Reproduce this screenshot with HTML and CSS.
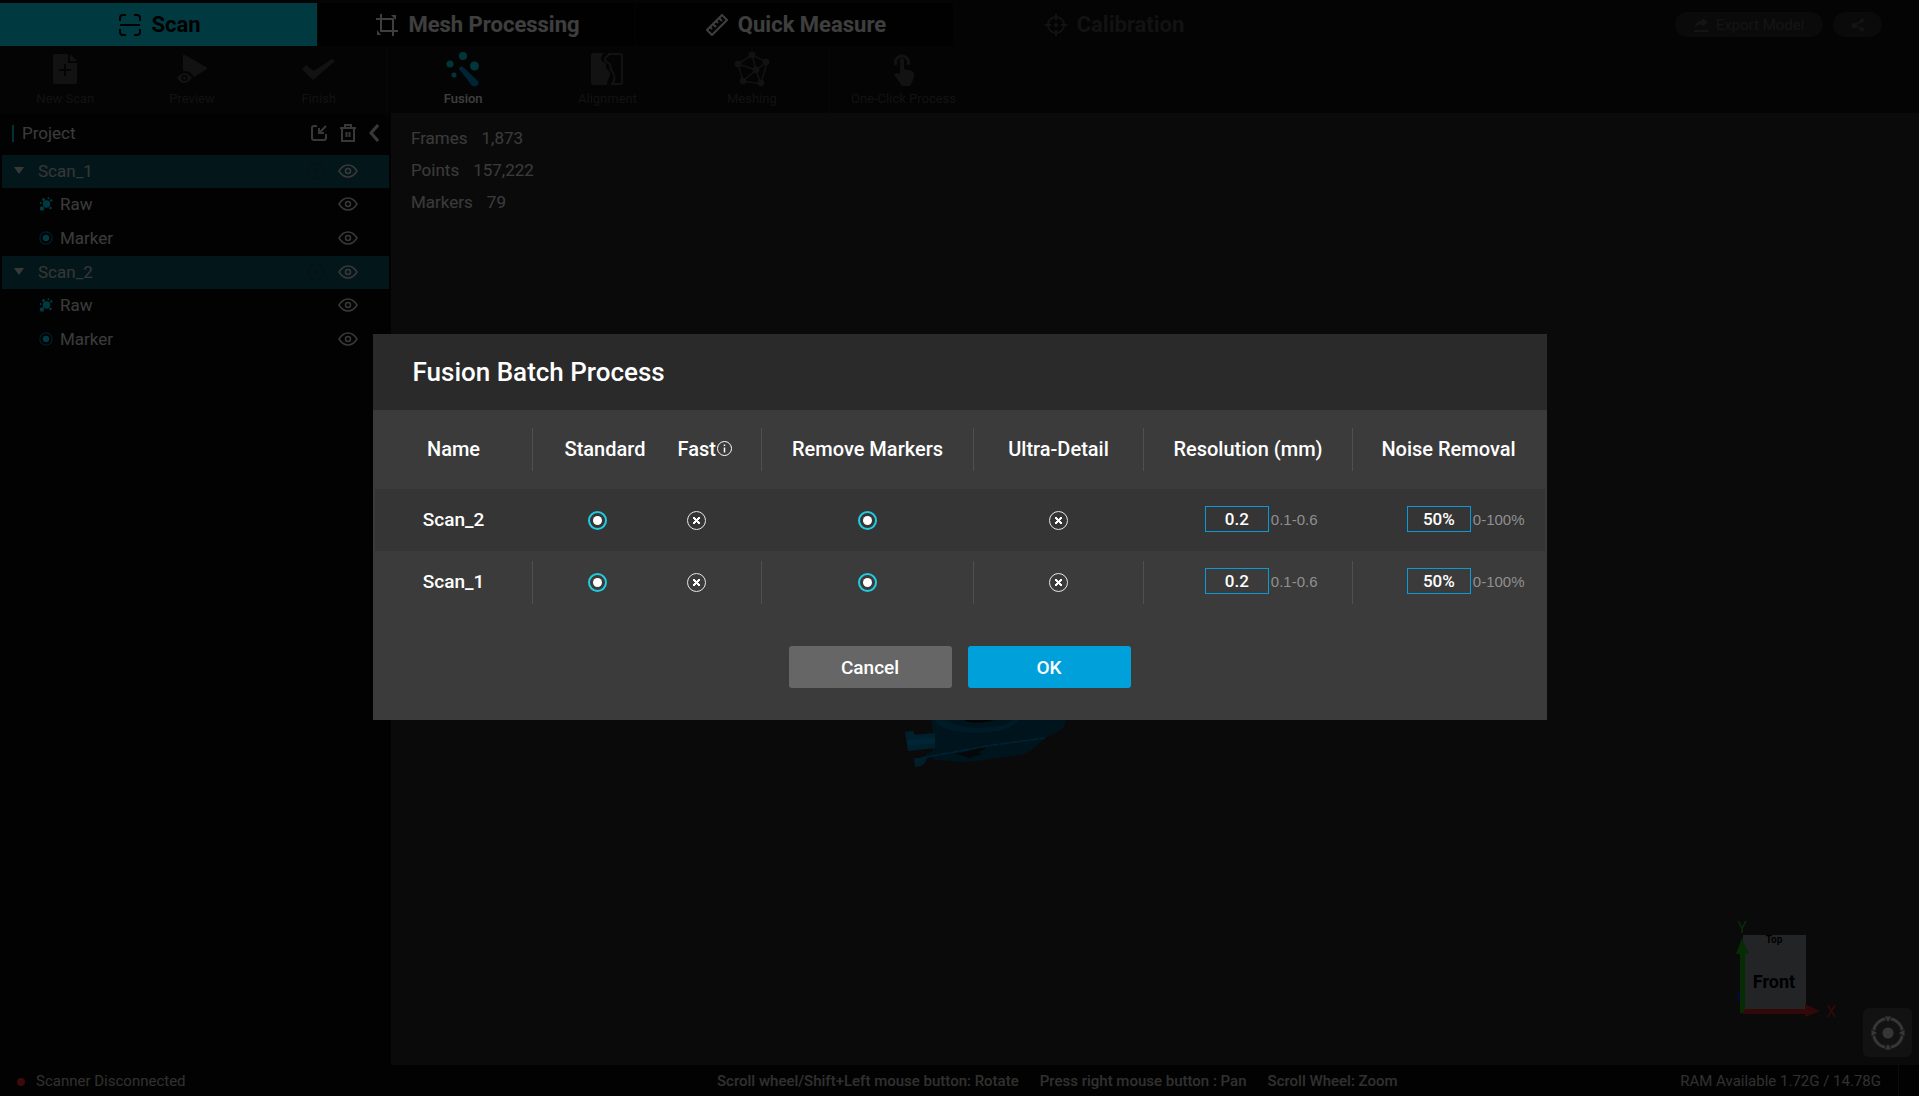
FILE: index.html
```html
<!DOCTYPE html>
<html lang="en">
<head>
    <meta charset="UTF-8">
    <meta name="viewport" content="width=device-width, initial-scale=1.0">
    <title>Fusion Batch Process</title>
    <link rel="stylesheet" href="styles.css">
</head>
<body>
    <!-- Shared icons -->
    <svg class="icon-defs" width="0" height="0" aria-hidden="true">
        <symbol id="icon-eye" viewBox="0 0 20 14">
            <path d="M1 7C3.500 3 6.500 1 10 1s6.500 2 9 6c-2.500 4-5.500 6-9 6S3.500 11 1 7z" fill="none" stroke="currentColor" stroke-width="1.500"/>
            <circle cx="10" cy="7" r="2.500" fill="none" stroke="currentColor" stroke-width="1.500"/>
        </symbol>
        <symbol id="icon-play" viewBox="0 0 18 18">
            <circle cx="9" cy="9" r="8" fill="none" stroke="currentColor" stroke-width="1.500"/>
            <path d="M7 5l5 4-5 4z" fill="currentColor"/>
        </symbol>
        <symbol id="icon-raw" viewBox="0 0 14 14">
            <circle cx="7.500" cy="7" r="3.700" fill="#00e8ff"/>
            <circle cx="3" cy="11.500" r="2.200" fill="#00e8ff"/>
            <circle cx="4.500" cy="2.500" r="1.500" fill="#00e8ff"/>
            <circle cx="9.500" cy="1.200" r="1" fill="#00e8ff"/>
            <circle cx="12.200" cy="3.500" r="1.200" fill="#00e8ff"/>
            <circle cx="1.700" cy="6" r="1" fill="#00e8ff"/>
            <circle cx="11.500" cy="11" r="1.300" fill="#00e8ff"/>
        </symbol>
        <symbol id="icon-marker" viewBox="0 0 14 14">
            <circle cx="7" cy="7" r="6.200" fill="none" stroke="#0078a8" stroke-width="1.200"/>
            <circle cx="7" cy="7" r="3.200" fill="#00e8ff"/>
        </symbol>
    </svg>

    <header class="top-bar">
        <nav class="tabs">
            <button type="button" class="tab active">
                <svg width="22" height="22" viewBox="0 0 22 22" fill="none" stroke="currentColor" stroke-width="2">
                    <path d="M1 7V4a3 3 0 0 1 3-3h3M15 1h3a3 3 0 0 1 3 3v3M21 15v3a3 3 0 0 1-3 3h-3M7 21H4a3 3 0 0 1-3-3v-3M1 11h20"/>
                </svg>
                Scan
            </button>
            <button type="button" class="tab">
                <svg width="22" height="22" viewBox="0 0 22 22" fill="none" stroke="currentColor" stroke-width="2">
                    <path d="M0 5h17v12M5 0v17h17M17 15v7"/>
                    <path d="M15 1h5v5zM1 16v5h4z" fill="currentColor" stroke="none"/>
                </svg>
                Mesh Processing
            </button>
            <button type="button" class="tab">
                <svg width="22" height="22" viewBox="0 0 22 22" fill="none" stroke="currentColor" stroke-width="2">
                    <path d="M16 1l5 5L6 21l-5-5zM13 4l3 3M10 7l2 2M7 10l3 3M4 13l2 2"/>
                </svg>
                Quick Measure
            </button>
            <button type="button" class="tab disabled" disabled>
                <svg width="22" height="22" viewBox="0 0 22 22" fill="none" stroke="currentColor" stroke-width="2">
                    <circle cx="11" cy="11" r="8"/>
                    <path d="M11 0v6M11 16v6M0 11h6M16 11h6M11 9v4M9 11h4"/>
                </svg>
                Calibration
            </button>
        </nav>
        <div class="top-actions">
            <button type="button" class="pill" disabled>
                <svg width="14" height="14" viewBox="0 0 14 14" fill="currentColor">
                    <path d="M8 0l6 4.500L8 9V6.500C5 6.500 2.500 7.500 1 10c0-4 3-7.500 7-7.500zM0 12h14v2H0z"/>
                </svg>
                Export Model
            </button>
            <button type="button" class="pill share" aria-label="Share" disabled>
                <svg width="14" height="14" viewBox="0 0 14 14" fill="currentColor">
                    <path d="M11 3L3 7.500l8 3.500" fill="none" stroke="currentColor" stroke-width="1.500"/>
                    <circle cx="11" cy="2.500" r="2"/><circle cx="3" cy="7.500" r="2.500"/><circle cx="11" cy="11.500" r="2"/>
                </svg>
            </button>
        </div>
    </header>

    <div class="toolbar">
        <div class="tool-group scan">
            <button type="button" class="tool" disabled>
                <svg width="36" height="36" viewBox="0 0 36 36" fill="currentColor">
                    <path d="M8 3h13v9h9v19a2 2 0 0 1-2 2H8a2 2 0 0 1-2-2V5a2 2 0 0 1 2-2zM23 3l7 7h-7z"/>
                    <path d="M18 13v12M12 19h12" stroke="#101010" stroke-width="2"/>
                </svg>
                New Scan
            </button>
            <button type="button" class="tool" disabled>
                <svg width="36" height="36" viewBox="0 0 36 36" fill="currentColor">
                    <path d="M9 5q0-2 2-1l21 12q2 1 0 2.500L20 26q-4-7-11-6z"/>
                    <path d="M3 27q8-10 15 0-8 10-15 0z"/>
                    <circle cx="10.500" cy="27" r="3" fill="#101010"/><circle cx="10.500" cy="27" r="1.500"/>
                </svg>
                Preview
            </button>
            <button type="button" class="tool" disabled>
                <svg width="36" height="36" viewBox="0 0 36 36" fill="currentColor">
                    <path d="M1 18l4-4 8 6L31 8l3 2-22 19z"/>
                </svg>
                Finish
            </button>
        </div>
        <div class="tool-group wide">
            <button type="button" class="tool active">
                <svg width="36" height="36" viewBox="0 0 36 36">
                    <g fill="#00d8e8">
                        <circle cx="18" cy="5" r="4"/><circle cx="5" cy="13" r="3.500"/><circle cx="29.500" cy="15" r="4.500"/><circle cx="9" cy="24" r="2.500"/>
                    </g>
                    <path d="M14 18q1-4 4-2l15 14q2 4-2 5-4 1-6-3z" fill="#0090d0"/>
                </svg>
                Fusion
            </button>
            <button type="button" class="tool" disabled>
                <svg width="36" height="36" viewBox="0 0 36 36" fill="currentColor">
                    <path d="M4 2h11c-3 3-4 6-2 8s5 2 4 5 5 5 4 9-3 5-3 10H4a2 2 0 0 1-2-2V4a2 2 0 0 1 2-2z"/>
                    <path d="M20 3h11a2 2 0 0 1 2 2v26a2 2 0 0 1-2 2h-8c4-5 3-8 1-11s-3-5-3-8-6-2-5-6 4-3 4-5z" fill="none" stroke="currentColor" stroke-width="2"/>
                </svg>
                Alignment
            </button>
            <button type="button" class="tool" disabled>
                <svg width="36" height="36" viewBox="0 0 36 36" fill="currentColor" stroke="currentColor">
                    <path d="M18 4L4 13l5 17 18 3 6-22zM18 4l4 15L4 13M33 11L22 19 9 30M22 19l5 14" fill="none" stroke-width="1.500"/>
                    <circle cx="18" cy="4" r="3"/><circle cx="4" cy="13" r="3"/><circle cx="9" cy="30" r="3"/><circle cx="27" cy="32" r="3"/><circle cx="32" cy="11" r="3"/><circle cx="22" cy="19" r="3"/>
                </svg>
                Meshing
            </button>
        </div>
        <div class="tool-group single">
            <button type="button" class="tool" disabled>
                <svg width="36" height="36" viewBox="0 0 36 36" fill="currentColor">
                    <path d="M10 14a6.500 6.500 0 1 1 12 0" fill="none" stroke="currentColor" stroke-width="3"/>
                    <path d="M14 9a2 2 0 0 1 4 0v9l8 2q2 1 2 3c0 6-2 8-4 12h-8c-3-4-5-8-8-11q1-3 6-1z"/>
                </svg>
                One-Click Process
            </button>
        </div>
    </div>

    <div class="workspace">
        <aside class="sidebar">
            <div class="sidebar-header">
                <h2>Project</h2>
                <button type="button" class="icon-btn" aria-label="Import">
                    <svg width="16" height="16" viewBox="0 0 16 16" fill="none" stroke="currentColor" stroke-width="2">
                        <path d="M6 1H3a2 2 0 0 0-2 2v10a2 2 0 0 0 2 2h10a2 2 0 0 0 2-2V9M15 1L8 8M8 3v5h5"/>
                    </svg>
                </button>
                <button type="button" class="icon-btn" aria-label="Delete">
                    <svg width="16" height="18" viewBox="0 0 16 18" fill="none" stroke="currentColor" stroke-width="2">
                        <path d="M0 4h16M2 4v13h12V4M5 4V1h6v3M6.500 8v5M9.500 8v5"/>
                    </svg>
                </button>
                <button type="button" class="icon-btn collapse" aria-label="Collapse">
                    <svg width="10" height="18" viewBox="0 0 10 18" fill="none" stroke="currentColor" stroke-width="3">
                        <path d="M9 1L2 9l7 8"/>
                    </svg>
                </button>
            </div>
            <ul class="tree">
                <li>
                    <div class="tree-row selected">
                        <span class="caret"></span>
                        <span class="tree-name">Scan_1</span>
                        <svg class="play" width="18" height="18"><use href="#icon-play"/></svg>
                        <svg class="eye" width="20" height="14"><use href="#icon-eye"/></svg>
                    </div>
                    <div class="tree-row child">
                        <svg width="14" height="14"><use href="#icon-raw"/></svg>
                        <span class="tree-name">Raw</span>
                        <svg class="eye" width="20" height="14"><use href="#icon-eye"/></svg>
                    </div>
                    <div class="tree-row child">
                        <svg width="14" height="14"><use href="#icon-marker"/></svg>
                        <span class="tree-name">Marker</span>
                        <svg class="eye" width="20" height="14"><use href="#icon-eye"/></svg>
                    </div>
                </li>
                <li>
                    <div class="tree-row selected">
                        <span class="caret"></span>
                        <span class="tree-name">Scan_2</span>
                        <svg class="play" width="18" height="18"><use href="#icon-play"/></svg>
                        <svg class="eye" width="20" height="14"><use href="#icon-eye"/></svg>
                    </div>
                    <div class="tree-row child">
                        <svg width="14" height="14"><use href="#icon-raw"/></svg>
                        <span class="tree-name">Raw</span>
                        <svg class="eye" width="20" height="14"><use href="#icon-eye"/></svg>
                    </div>
                    <div class="tree-row child">
                        <svg width="14" height="14"><use href="#icon-marker"/></svg>
                        <span class="tree-name">Marker</span>
                        <svg class="eye" width="20" height="14"><use href="#icon-eye"/></svg>
                    </div>
                </li>
            </ul>
        </aside>

        <main class="viewport">
            <dl class="stats">
                <div><dt>Frames</dt><dd>1,873</dd></div>
                <div><dt>Points</dt><dd>157,222</dd></div>
                <div><dt>Markers</dt><dd>79</dd></div>
            </dl>

            <!-- Scanned model -->
            <svg class="model" width="164" height="80" viewBox="0 0 164 80">
                <path d="M26 0h135c-1 6-3 9-7 11l-14 7-12 11-8 5-40 6-22 2-27-2-12-5 9-4-2-12 2-7z" fill="#005078"/>
                <path d="M30 0q4 8 20 11 22 4 44 0Q106 8 114 0h-6q-8 6-20 7-20 3-36-2-8-3-12-5z" fill="#006898"/>
                <path d="M60 1q13 4 30-1H60z" fill="#101010"/>
                <path d="M0 12l8-1 2 4 20-2v15L3 31z" fill="#0080b8"/>
                <path d="M3 20l27-2v5L3 25z" fill="#0098d8"/>
                <path d="M16 38L88 25l52-7" fill="none" stroke="#0088c8" stroke-width="1.500" stroke-dasharray="9 1"/>
                <path d="M9 38h13q-1 8-12 9z" fill="#0078b0"/>
                <path d="M50 34l14-3 6-2 13-2-9 5 2 3-7 1-4 3-5-3z" fill="#141c24"/>
            </svg>

            <!-- Orientation cube -->
            <svg class="gizmo" width="110" height="108" viewBox="0 0 110 108">
                <circle cx="8" cy="79" r="6" fill="#1028e0"/>
                <rect x="8" y="17" width="63" height="76" fill="#8c9094"/>
                <text class="face top" x="39" y="25">Top</text>
                <text class="face" x="39" y="70">Front</text>
                <path d="M5 95V36H1L7 20l7 16h-4v59z" fill="#18b018"/>
                <path d="M7 96l3-5h60v-5l15 7-15 6v-3z" fill="#c82020"/>
                <text class="axis axis-y" x="7" y="15">Y</text>
                <text class="axis axis-x" x="96" y="99">X</text>
            </svg>

            <button type="button" class="recenter" aria-label="Reset view">
                <svg width="36" height="36" viewBox="0 0 36 36" fill="currentColor">
                    <circle cx="18" cy="18" r="14.500" fill="none" stroke="currentColor" stroke-width="3"/>
                    <circle cx="18" cy="18" r="5.500"/>
                    <path d="M14 1h8l-4 7zM14 35h8l-4-7zM1 14v8l7-4zM35 14v8l-7-4z" stroke="#484848" stroke-width="1"/>
                </svg>
            </button>
        </main>
    </div>

    <footer class="status-bar">
        <p class="status">Scanner Disconnected</p>
        <p class="hints">
            <span>Scroll wheel/Shift+Left mouse button: Rotate</span>
            <span>Press right mouse button : Pan</span>
            <span>Scroll Wheel: Zoom</span>
        </p>
        <p class="ram">RAM Available 1.72G / 14.78G</p>
    </footer>

    <div class="overlay">
        <form class="dialog" role="dialog" aria-labelledby="dialogTitle">
            <h1 id="dialogTitle">Fusion Batch Process</h1>
            <table class="batch-table">
                <colgroup>
                    <col class="col-name">
                    <col class="col-standard">
                    <col class="col-fast">
                    <col class="col-markers">
                    <col class="col-detail">
                    <col class="col-resolution">
                    <col>
                </colgroup>
                <thead>
                    <tr>
                        <th>Name</th>
                        <th class="standard">Standard</th>
                        <th class="fast"><span>Fast<svg width="15" height="15" viewBox="0 0 15 15" fill="none" stroke="currentColor"><circle cx="7.500" cy="7.500" r="7"/><path d="M7.500 3.500v1.500M7.500 6.500v5" stroke-width="1.500"/></svg></span></th>
                        <th>Remove Markers</th>
                        <th>Ultra-Detail</th>
                        <th>Resolution (mm)</th>
                        <th>Noise Removal</th>
                    </tr>
                </thead>
                <tbody>
                    <tr class="current">
                        <td>Scan_2</td>
                        <td><input type="radio" name="mode2" aria-label="Scan_2 standard" checked></td>
                        <td class="fast"><input type="radio" name="mode2" aria-label="Scan_2 fast"></td>
                        <td><input type="checkbox" aria-label="Scan_2 remove markers" checked></td>
                        <td><input type="checkbox" aria-label="Scan_2 ultra-detail"></td>
                        <td class="value"><label><input type="text" value="0.2" aria-label="Scan_2 resolution"><span>0.1-0.6</span></label></td>
                        <td class="value last"><label><input type="text" value="50%" aria-label="Scan_2 noise removal"><span>0-100%</span></label></td>
                    </tr>
                    <tr>
                        <td>Scan_1</td>
                        <td><input type="radio" name="mode1" aria-label="Scan_1 standard" checked></td>
                        <td class="fast"><input type="radio" name="mode1" aria-label="Scan_1 fast"></td>
                        <td><input type="checkbox" aria-label="Scan_1 remove markers" checked></td>
                        <td><input type="checkbox" aria-label="Scan_1 ultra-detail"></td>
                        <td class="value"><label><input type="text" value="0.2" aria-label="Scan_1 resolution"><span>0.1-0.6</span></label></td>
                        <td class="value last"><label><input type="text" value="50%" aria-label="Scan_1 noise removal"><span>0-100%</span></label></td>
                    </tr>
                </tbody>
            </table>
            <div class="dialog-actions">
                <button type="button" class="cancel-btn">Cancel</button>
                <button type="button" class="ok-btn">OK</button>
            </div>
        </form>
    </div>
</body>
</html>
```
FILE: styles.css
```css
* {
    box-sizing: border-box;
}
body {
    font-family: Roboto, "Noto Sans", sans-serif;
    font-size: 17px;
    margin: 0;
    height: 100vh;
    display: flex;
    flex-direction: column;
    background-color: #080808;
    color: #e8e8e8;
    overflow: hidden;
}
button {
    font-family: inherit;
    border: none;
    cursor: pointer;
}
h1, h2, p, ul, dl, dd {
    margin: 0;
    padding: 0;
}
svg {
    flex: none;
}
.icon-defs {
    position: absolute;
}

/* Top bar */
.top-bar {
    display: flex;
    justify-content: space-between;
    align-items: center;
    height: 46px;
    padding-top: 3px;
    background-color: #101010;
}
.tabs {
    display: flex;
    height: 43px;
}
.tab {
    display: flex;
    align-items: center;
    justify-content: center;
    gap: 10px;
    width: 318px;
    padding: 0 0 0 3px;
    background-color: #060606;
    border-right: 1px solid #141414;
    color: #f8f8f8;
    font-size: 22px;
    font-weight: 700;
}
.tab.active {
    background-color: #00e8ff;
    color: #000;
}
.tab.disabled {
    background-color: transparent;
    border-right: none;
    color: #484848;
}
.top-actions {
    display: flex;
    gap: 10px;
    padding-right: 37px;
}
.pill {
    display: flex;
    align-items: center;
    justify-content: center;
    gap: 8px;
    width: 148px;
    height: 25px;
    padding: 0;
    border-radius: 13px;
    background-color: #282828;
    color: #505050;
    font-size: 15px;
}
.pill.share {
    width: 49px;
}

/* Toolbar */
.toolbar {
    display: flex;
    height: 67px;
    background-color: #101010;
}
.tool-group {
    display: flex;
    border-right: 1px solid #202020;
}
.tool-group.scan {
    width: 387px;
    padding: 0 4px 0 2px;
}
.tool-group.wide {
    width: 442px;
    padding: 0 4px;
}
.tool-group.single {
    width: 149px;
    border-right: none;
}
.tool {
    display: flex;
    flex: 1;
    flex-direction: column;
    align-items: center;
    gap: 2px;
    padding: 5px 0 0;
    background: none;
    color: #484848;
    font-size: 13px;
    line-height: 20px;
    white-space: nowrap;
}
.tool.active {
    color: #f8f8f8;
    font-weight: 500;
}

/* Sidebar */
.workspace {
    display: flex;
    flex: 1;
    min-height: 0;
}
.sidebar {
    width: 391px;
    padding: 0 2px;
    background-color: #080808;
}
.sidebar-header {
    display: flex;
    align-items: center;
    gap: 13px;
    height: 42px;
    padding: 0 10px 2px;
}
.sidebar-header h2 {
    flex: 1;
    padding-left: 8px;
    border-left: 2px solid #00c8e0;
    font-size: 17px;
    font-weight: 400;
    line-height: 17px;
}
.icon-btn {
    display: flex;
    padding: 0;
    background: none;
    color: #e0e0e0;
}
.tree {
    list-style: none;
}
.tree-row {
    display: flex;
    align-items: center;
    height: 34px;
    padding: 0 31px 2px 12px;
}
.tree-row.selected {
    height: 33px;
    background-color: #0c5c6c;
    color: #d8d8d8;
}
.tree-row.child {
    gap: 7px;
    padding-left: 37px;
}
.tree-name {
    flex: 1;
}
.caret {
    width: 10px;
    height: 7px;
    margin-right: 14px;
    background-color: #e0e0e0;
    clip-path: polygon(0 0, 100% 0, 50% 100%);
}
.play {
    margin-right: 13px;
    color: #204850;
}
.eye {
    color: #e0e0e0;
}

/* 3D viewport */
.viewport {
    position: relative;
    flex: 1;
    background-color: #282828;
}
.stats {
    padding: 9px 20px;
    line-height: 32px;
}
.stats div {
    display: flex;
    gap: 14px;
}
.model {
    position: absolute;
    top: 607px;
    left: 514px;
}
.gizmo {
    position: absolute;
    right: 74px;
    bottom: 39px;
}
.gizmo text {
    text-anchor: middle;
}
.face {
    font-size: 18px;
    font-weight: 700;
}
.face.top {
    font-size: 10px;
}
.axis {
    font-size: 16px;
}
.axis-y {
    fill: #18b018;
}
.axis-x {
    fill: #c82020;
}
.recenter {
    position: absolute;
    right: 7px;
    bottom: 8px;
    display: flex;
    align-items: center;
    justify-content: center;
    width: 49px;
    height: 49px;
    padding: 0;
    border-radius: 6px;
    background-color: #484848;
    color: #d8d8d8;
}

/* Status bar */
.status-bar {
    display: flex;
    height: 31px;
    padding: 0 20px 0 17px;
    background-color: #080808;
    color: #c0c0c0;
    font-size: 15px;
    line-height: 32px;
}
.status {
    width: 700px;
}
.status::before {
    content: "";
    display: inline-block;
    width: 8px;
    height: 8px;
    margin-right: 11px;
    border-radius: 50%;
    background-color: #f02828;
}
.hints {
    display: flex;
    gap: 21px;
    font-weight: 500;
}
.ram {
    flex: 1;
    padding-right: 17px;
    border-right: 1px solid #303030;
    text-align: right;
}

/* Dialog */
.overlay {
    position: fixed;
    inset: 0;
    display: flex;
    align-items: center;
    justify-content: center;
    padding-bottom: 42px;
    background-color: rgba(0, 0, 0, 0.75);
}
.dialog {
    width: 90%;
    max-width: 1174px;
    padding-bottom: 32px;
    background-color: #3b3b3b;
    color: #fff;
}
.dialog h1 {
    padding: 0 40px;
    background-color: #2a2a2a;
    font-size: 26px;
    font-weight: 500;
    line-height: 76px;
}
.batch-table {
    width: calc(100% - 4px);
    margin: 0 2px;
    border-collapse: collapse;
    table-layout: fixed;
}
.col-name {
    width: 158px;
}
.col-standard {
    width: 129px;
}
.col-fast {
    width: 100px;
}
.col-markers {
    width: 212px;
}
.col-detail {
    width: 170px;
}
.col-resolution {
    width: 209px;
}
.batch-table th, .batch-table td {
    height: 62px;
    padding: 0 0 2px;
    text-align: center;
    font-size: 19px;
    font-weight: 500;
    background: linear-gradient(#505050, #505050) right center / 1px 43px no-repeat;
}
.batch-table th {
    height: 79px;
    font-size: 20px;
}
.batch-table th.standard {
    padding-left: 16px;
}
.batch-table th:nth-child(2), .batch-table td:nth-child(2), .batch-table th:last-child, .batch-table td:last-child {
    background: none;
}
.batch-table th.fast {
    padding-left: 16px;
    text-align: left;
}
.batch-table td.fast {
    padding-left: 25px;
    text-align: left;
}
.fast span {
    display: flex;
    align-items: center;
    gap: 1px;
}
.batch-table .current td {
    background: #353535;
}
.batch-table td.value {
    padding-right: 35px;
}
.batch-table td.last {
    padding-right: 20px;
}
.value label {
    display: flex;
    align-items: center;
    justify-content: flex-end;
    gap: 2px;
    color: #909090;
    font-family: "Liberation Sans", Arial, sans-serif;
    font-size: 15px;
    font-weight: 400;
}
input[type="text"] {
    width: 64px;
    height: 26px;
    padding: 0;
    border: 1px solid #0a9ad8;
    background: none;
    color: #fff;
    font-family: Roboto, "Noto Sans", sans-serif;
    font-size: 17px;
    font-weight: 500;
    text-align: center;
}
input[type="radio"], input[type="checkbox"] {
    appearance: none;
    display: inline-flex;
    align-items: center;
    justify-content: center;
    width: 19px;
    height: 19px;
    margin: 0;
    border: 1px solid #e8e8e8;
    border-radius: 50%;
    vertical-align: middle;
    cursor: pointer;
}
input[type="radio"]::before, input[type="checkbox"]::before {
    content: "";
    width: 7px;
    height: 7px;
    background: linear-gradient(45deg, transparent 42%, #fff 42%, #fff 58%, transparent 58%), linear-gradient(-45deg, transparent 42%, #fff 42%, #fff 58%, transparent 58%);
}
input[type="radio"]:checked, input[type="checkbox"]:checked {
    border: 2px solid #20cce0;
}
input[type="radio"]:checked::before, input[type="checkbox"]:checked::before {
    width: 9px;
    height: 9px;
    border-radius: 50%;
    background: #fff;
}
.dialog-actions {
    display: flex;
    justify-content: center;
    gap: 16px;
    margin-top: 33px;
}
.dialog-actions button {
    width: 163px;
    height: 42px;
    border-radius: 3px;
    color: #fff;
    font-size: 19px;
    font-weight: 500;
}
.cancel-btn {
    background-color: #666;
}
.cancel-btn:hover {
    background-color: #777;
}
.ok-btn {
    background-color: #00a0da;
}
.ok-btn:hover {
    background-color: #0090c4;
}
```
